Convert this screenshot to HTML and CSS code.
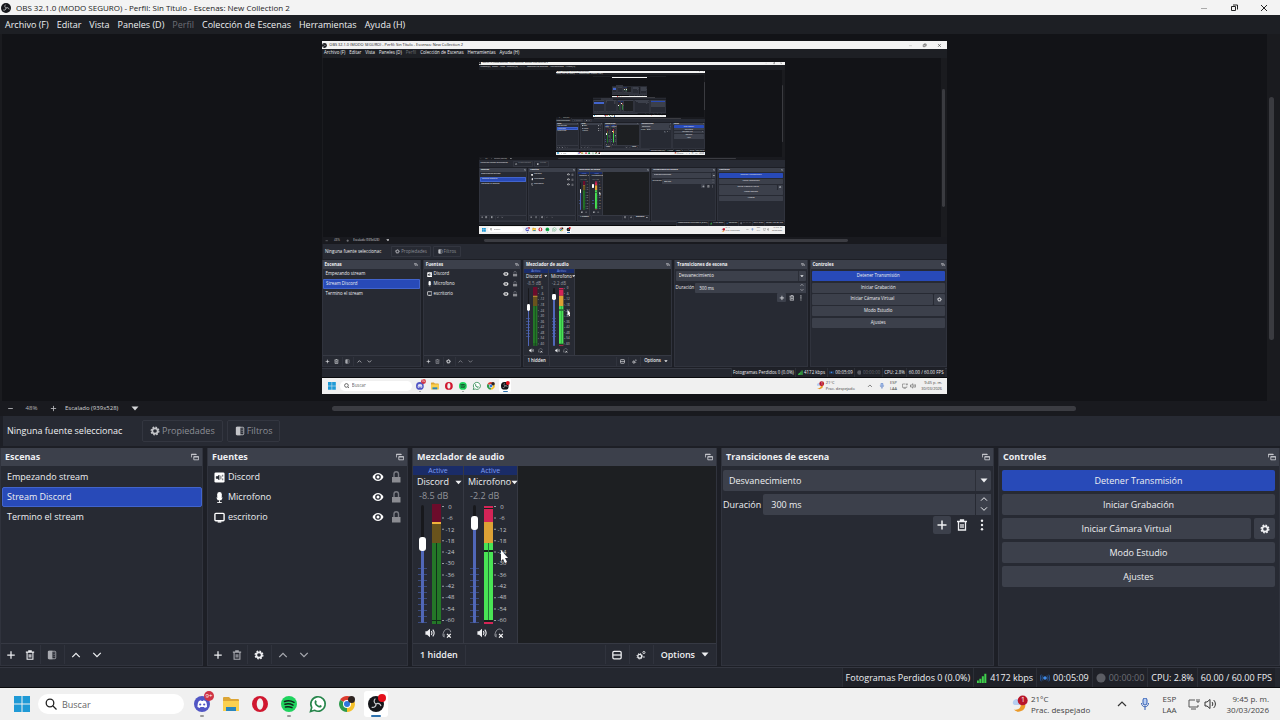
FILE: index.html
```html
<!DOCTYPE html>
<html lang="es">
<head>
    <meta charset="UTF-8">
    <meta name="viewport" content="width=device-width, initial-scale=1.0">
    <title>OBS 32.1.0</title>
    <link rel="stylesheet" href="styles.css">
</head>
<body>

    <!-- Shared icons -->
    <svg class="sprite" aria-hidden="true">
        <symbol id="i-obs" viewBox="0 0 16 16"><circle cx="8" cy="8" r="8" fill="#15161a"/><g fill="none" stroke="#c9cace" stroke-width="1.200"><path d="M8 8C5.800 7 5.500 4.200 7.400 2.600"/><path d="M8 8C5.800 7 5.500 4.200 7.400 2.600" transform="rotate(120 8 8)"/><path d="M8 8C5.800 7 5.500 4.200 7.400 2.600" transform="rotate(240 8 8)"/></g></symbol>
        <symbol id="i-float" viewBox="0 0 10 10"><path d="M.5 5.500v-4h6v1M.5 2h6M3.500 4.500h6v4h-6zM3.500 5h6" fill="none" stroke="#d5d7dc"/></symbol>
        <symbol id="i-plus" viewBox="0 0 12 12"><path d="M6 1.500v9M1.500 6h9" fill="none" stroke="currentColor" stroke-width="1.500"/></symbol>
        <symbol id="i-minus" viewBox="0 0 12 12"><path d="M2 6h8" fill="none" stroke="currentColor" stroke-width="1.500"/></symbol>
        <symbol id="i-trash" viewBox="0 0 12 12"><path d="M1 2.500h10M4.500 2V1h3v1M2.500 3v8h7V3M5 5v4M7 5v4" fill="none" stroke="currentColor" stroke-width="1.300"/></symbol>
        <symbol id="i-filter" viewBox="0 0 12 12"><path d="M2.500 1.500h7a1 1 0 0 1 1 1v7a1 1 0 0 1-1 1h-7z" fill="none" stroke="currentColor"/><path d="M2 1h4.500v10H2a1 1 0 0 1-1-1V2a1 1 0 0 1 1-1z" fill="currentColor"/><path d="M8.500 3v6" stroke="currentColor" stroke-dasharray="1 1"/></symbol>
        <symbol id="i-up" viewBox="0 0 12 12"><path d="M1.500 8.500L6 4l4.500 4.500" fill="none" stroke="currentColor" stroke-width="1.500"/></symbol>
        <symbol id="i-down" viewBox="0 0 12 12"><path d="M1.500 3.500L6 8l4.500-4.500" fill="none" stroke="currentColor" stroke-width="1.500"/></symbol>
        <symbol id="i-caret" viewBox="0 0 8 5"><path d="M.5.5h7L4 4.500z" fill="currentColor"/></symbol>
        <symbol id="i-gear" viewBox="0 0 12 12"><circle cx="6" cy="6" r="3.200" fill="none" stroke="currentColor" stroke-width="2"/><circle cx="6" cy="6" r="4.600" fill="none" stroke="currentColor" stroke-width="1.600" stroke-dasharray="2 1.610"/></symbol>
        <symbol id="i-gears" viewBox="0 0 12 12"><circle cx="4.500" cy="7.500" r="2.300" fill="none" stroke="currentColor" stroke-width="1.500"/><circle cx="4.500" cy="7.500" r="3.400" fill="none" stroke="currentColor" stroke-dasharray="1.300 1.370"/><circle cx="9.500" cy="3" r="1.300" fill="none" stroke="currentColor"/><circle cx="9.500" cy="8.500" r=".9" fill="currentColor"/></symbol>
        <symbol id="i-dots" viewBox="0 0 12 12"><g fill="currentColor"><circle cx="6" cy="1.800" r="1.200"/><circle cx="6" cy="6" r="1.200"/><circle cx="6" cy="10.200" r="1.200"/></g></symbol>
        <symbol id="i-eye" viewBox="0 0 12 12"><path d="M.5 6C3 .8 9 .8 11.500 6 9 11.200 3 11.200.5 6z" fill="#fff"/><circle cx="6" cy="6" r="2.800" fill="#272a33"/><circle cx="6" cy="6" r="1.500" fill="#fff"/></symbol>
        <symbol id="i-lock" viewBox="0 0 12 12"><path d="M4 6V3a2.200 2.200 0 0 1 4.500 0v3" fill="none" stroke="#777981" stroke-width="1.400"/><path d="M2 6h8.500v5.500H2z" fill="#8b8c92"/></symbol>
        <symbol id="i-app" viewBox="0 0 12 12"><rect x=".5" y=".5" width="11" height="11" rx="1.500" fill="#fff"/><path d="M2.500 5H4l1.500-1.500v5L4 7H2.500zM7.500 4v4M9.500 3v2M9.500 7v2" fill="#272a33" stroke="#272a33" stroke-width=".8"/></symbol>
        <symbol id="i-mic" viewBox="0 0 12 12"><rect x="3.500" y="0" width="5" height="7.500" rx="2.500" fill="#fff"/><path d="M2.500 6h7l-1.500 3H4z" fill="#fff"/><path d="M6 9v2.500M3.500 11.500h5" fill="none" stroke="#fff"/></symbol>
        <symbol id="i-screen" viewBox="0 0 12 12"><rect x="1" y="1.500" width="10" height="8" rx="1" fill="none" stroke="#fff" stroke-width="1.500"/><path d="M4 10.800h4" stroke="#fff" stroke-width="1.500"/></symbol>
        <symbol id="i-speaker" viewBox="0 0 12 12"><path d="M.5 4h2L6 1v10L2.500 8h-2z" fill="currentColor"/><path d="M7.500 3.800c1 1.300 1 3.100 0 4.400M9.300 2c2 2.400 2 5.600 0 8" fill="none" stroke="currentColor" stroke-width="1.300"/></symbol>
        <symbol id="i-phones" viewBox="0 0 12 12"><path d="M2.500 11C.5 10 1 7 2 5c1.500-5 8-5 8.500 0M2.500 7v4" fill="none" stroke="#92949b" stroke-width="1.200"/><path d="M6 7l4.500 4.500M10.500 7L6 11.500" stroke="#fff" stroke-width="1.500"/></symbol>
        <symbol id="i-layout" viewBox="0 0 12 12"><rect x="1" y="1.500" width="10" height="9" rx="1.500" fill="none" stroke="currentColor" stroke-width="1.500"/><path d="M1 6h10" stroke="currentColor" stroke-width="1.500"/></symbol>
    </svg>

    <div class="desktop">
        <!-- Title bar -->
        <div class="titlebar">
            <svg class="ico-sm"><use href="#i-obs"/></svg>
            <span class="title-text">OBS 32.1.0 (MODO SEGURO) - Perfil: Sin Título - Escenas: New Collection 2</span>
            <button class="win-btn" aria-label="Minimizar"><svg viewBox="0 0 10 10"><path d="M2 5.500h6" stroke="#aaa"/></svg></button>
            <button class="win-btn" aria-label="Restaurar"><svg viewBox="0 0 10 10"><path d="M2.500 3.500h4v4h-4zM4 2h4.500v4.500" fill="none" stroke="#222"/></svg></button>
            <button class="win-btn" aria-label="Cerrar"><svg viewBox="0 0 10 10"><path d="M2 2l6 6M8 2L2 8" stroke="#222"/></svg></button>
        </div>

        <!-- Menu -->
        <nav class="menubar">
            <a href="#">Archivo (F)</a>
            <a href="#">Editar</a>
            <a href="#">Vista</a>
            <a href="#">Paneles (D)</a>
            <a href="#" class="off">Perfil</a>
            <a href="#">Colección de Escenas</a>
            <a href="#">Herramientas</a>
            <a href="#">Ayuda (H)</a>
        </nav>

        <!-- Preview -->
        <div class="preview">
            <div class="canvas"><div class="screen"></div></div>
            <div class="vscroll"><div class="thumb"></div></div>
        </div>
        <div class="zoombar">
            <button aria-label="Alejar"><svg class="ico-xs"><use href="#i-minus"/></svg></button>
            <span class="zoom-level">48%</span>
            <button aria-label="Acercar"><svg class="ico-xs"><use href="#i-plus"/></svg></button>
            <label class="drop scale-drop">
                <select aria-label="Escala"><option>Escalado (939x528)</option></select>
                <svg class="caret"><use href="#i-caret"/></svg>
            </label>
            <div class="hscroll"><div class="thumb"></div></div>
        </div>

        <!-- Selected source -->
        <div class="context">
            <span class="context-name">Ninguna fuente seleccionac</span>
            <button class="ghost"><svg class="ico-sm"><use href="#i-gear"/></svg>Propiedades</button>
            <button class="ghost"><svg class="ico-sm"><use href="#i-filter"/></svg>Filtros</button>
        </div>

        <!-- Docks -->
        <div class="docks">
            <section class="dock">
                <h2>Escenas <svg class="float"><use href="#i-float"/></svg></h2>
                <ul class="list">
                    <li><button class="row">Empezando stream</button></li>
                    <li><button class="row selected">Stream Discord</button></li>
                    <li><button class="row">Termino el stream</button></li>
                </ul>
                <div class="tools">
                    <button aria-label="Agregar escena"><svg><use href="#i-plus"/></svg></button>
                    <button aria-label="Eliminar escena"><svg><use href="#i-trash"/></svg></button>
                    <button class="sep" aria-label="Filtros de escena"><svg class="dim"><use href="#i-filter"/></svg></button>
                    <button class="sep" aria-label="Subir escena"><svg><use href="#i-up"/></svg></button>
                    <button aria-label="Bajar escena"><svg><use href="#i-down"/></svg></button>
                </div>
            </section>

            <section class="dock">
                <h2>Fuentes <svg class="float"><use href="#i-float"/></svg></h2>
                <ul class="list sources">
                    <li><svg><use href="#i-app"/></svg><span>Discord</span><button aria-label="Ver Discord"><svg><use href="#i-eye"/></svg></button><button aria-label="Bloquear Discord"><svg><use href="#i-lock"/></svg></button></li>
                    <li><svg><use href="#i-mic"/></svg><span>Microfono</span><button aria-label="Ver Microfono"><svg><use href="#i-eye"/></svg></button><button aria-label="Bloquear Microfono"><svg><use href="#i-lock"/></svg></button></li>
                    <li><svg><use href="#i-screen"/></svg><span>escritorio</span><button aria-label="Ver escritorio"><svg><use href="#i-eye"/></svg></button><button aria-label="Bloquear escritorio"><svg><use href="#i-lock"/></svg></button></li>
                </ul>
                <div class="tools">
                    <button aria-label="Agregar fuente"><svg><use href="#i-plus"/></svg></button>
                    <button aria-label="Eliminar fuente"><svg class="dim"><use href="#i-trash"/></svg></button>
                    <button class="sep" aria-label="Propiedades de la fuente"><svg><use href="#i-gear"/></svg></button>
                    <button class="sep" aria-label="Subir fuente"><svg class="dim"><use href="#i-up"/></svg></button>
                    <button aria-label="Bajar fuente"><svg class="dim"><use href="#i-down"/></svg></button>
                </div>
            </section>

            <section class="dock">
                <h2>Mezclador de audio <svg class="float"><use href="#i-float"/></svg></h2>
                <div class="mixer">
                    <div class="strip">
                        <div class="active">Active</div>
                        <button class="strip-name">Discord <svg class="caret"><use href="#i-caret"/></svg></button>
                        <div class="db">-8.5 dB</div>
                        <div class="levels">
                            <input class="fader" type="range" min="0" max="100" value="69" style="--level: 69%" aria-label="Volumen de Discord">
                            <svg class="meter" viewBox="0 0 12 120" preserveAspectRatio="none">
                                <path fill="#6c0c2b" d="M0 0h9v18H0z"/><path fill="#f1b33b" d="M0 18h9v2H0z"/><path fill="#69531c" d="M0 20h9v19H0z"/><path fill="#247728" d="M0 39h9v81H0z"/>
                                <path fill="#11301a" d="M0 116h9v1H0zM4 39h1v81H4z"/><path stroke="#9a9ca2" stroke-dasharray="1 10.400" stroke-width="2" d="M11 2v118"/>
                            </svg>
                            <div class="scale"><span>0</span><span>-6</span><span>-12</span><span>-18</span><span>-24</span><span>-30</span><span>-36</span><span>-42</span><span>-48</span><span>-54</span><span>-60</span></div>
                        </div>
                        <div class="strip-btns">
                            <button aria-label="Silenciar Discord"><svg><use href="#i-speaker"/></svg></button>
                            <button aria-label="Monitorizar Discord"><svg><use href="#i-phones"/></svg></button>
                        </div>
                    </div>
                    <div class="strip">
                        <div class="active">Active</div>
                        <button class="strip-name">Microfono <svg class="caret"><use href="#i-caret"/></svg></button>
                        <div class="db">-2.2 dB</div>
                        <div class="levels">
                            <input class="fader" type="range" min="0" max="100" value="89" style="--level: 89%" aria-label="Volumen de Microfono">
                            <svg class="meter" viewBox="0 0 12 120" preserveAspectRatio="none">
                                <path fill="#d42457" d="M0 2h9v16H0z"/><path fill="#dda135" d="M0 18h9v21H0z"/><path fill="#49e455" d="M0 39h9v79H0z"/><path fill="#d42457" d="M0 118h9v2H0z"/>
                                <path fill="#17231c" d="M0 4h9v1H0zM0 46h9v2H0zM0 116h9v2H0z"/><path fill="#237a35" d="M4 39h1v77H4z"/><path stroke="#9a9ca2" stroke-dasharray="1 10.400" stroke-width="2" d="M11 2v118"/>
                            </svg>
                            <div class="scale"><span>0</span><span>-6</span><span>-12</span><span>-18</span><span>-24</span><span>-30</span><span>-36</span><span>-42</span><span>-48</span><span>-54</span><span>-60</span></div>
                            <svg class="cursor" viewBox="0 0 8 13"><path d="M1 0v11l2-2 2 4 2-1-2-4h3z" fill="#fff"/></svg>
                        </div>
                        <div class="strip-btns">
                            <button aria-label="Silenciar Microfono"><svg><use href="#i-speaker"/></svg></button>
                            <button aria-label="Monitorizar Microfono"><svg><use href="#i-phones"/></svg></button>
                        </div>
                    </div>
                </div>
                <div class="tools mixer-tools">
                    <button class="word">1 hidden</button>
                    <span class="fill"></span>
                    <button class="sep" aria-label="Disposición"><svg><use href="#i-layout"/></svg></button>
                    <button class="sep" aria-label="Propiedades avanzadas de audio"><svg><use href="#i-gears"/></svg></button>
                    <button class="sep word">Options <svg class="caret"><use href="#i-caret"/></svg></button>
                </div>
            </section>

            <section class="dock">
                <h2>Transiciones de escena <svg class="float"><use href="#i-float"/></svg></h2>
                <div class="form">
                    <label class="drop field">
                        <select aria-label="Transición"><option>Desvanecimiento</option></select>
                        <span class="drop-arrow"><svg class="caret"><use href="#i-caret"/></svg></span>
                    </label>
                    <div class="duration">
                        <label>Duración <input type="text" value="300 ms"></label>
                        <div class="spin">
                            <button aria-label="Más"><svg><use href="#i-up"/></svg></button>
                            <button aria-label="Menos"><svg><use href="#i-down"/></svg></button>
                        </div>
                    </div>
                    <div class="form-tools">
                        <button class="lit" aria-label="Agregar transición"><svg><use href="#i-plus"/></svg></button>
                        <button aria-label="Eliminar transición"><svg><use href="#i-trash"/></svg></button>
                        <button aria-label="Más opciones"><svg><use href="#i-dots"/></svg></button>
                    </div>
                </div>
            </section>

            <section class="dock">
                <h2>Controles <svg class="float"><use href="#i-float"/></svg></h2>
                <div class="controls">
                    <button class="btn primary">Detener Transmisión</button>
                    <button class="btn">Iniciar Grabación</button>
                    <div class="pair">
                        <button class="btn">Iniciar Cámara Virtual</button>
                        <button class="btn" aria-label="Configurar cámara virtual"><svg class="ico-sm"><use href="#i-gear"/></svg></button>
                    </div>
                    <button class="btn">Modo Estudio</button>
                    <button class="btn">Ajustes</button>
                </div>
            </section>
        </div>

        <!-- Status bar -->
        <div class="status">
            <span>Fotogramas Perdidos 0 (0.0%)</span>
            <span><svg viewBox="0 0 12 12"><path d="M1 12V9M4 12V7M7 12V4M10 12V1" stroke="#3fd14c" stroke-width="2.400"/></svg>4172 kbps</span>
            <span><svg viewBox="0 0 12 12"><circle cx="6" cy="6" r="2.200" fill="#3f8bea"/><path d="M3.500 3c-1.500 1.500-1.500 4.500 0 6M8.500 3c1.500 1.500 1.500 4.500 0 6M1.500 2c-1.500 2-1.500 6 0 8M10.500 2c1.500 2 1.500 6 0 8" fill="none" stroke="#2b63ad"/></svg>00:05:09</span>
            <span class="off"><svg viewBox="0 0 12 12"><circle cx="6" cy="6" r="5.500" fill="#5b5d64"/></svg>00:00:00</span>
            <span>CPU: 2.8%</span>
            <span>60.00 / 60.00 FPS</span>
        </div>

        <!-- Taskbar -->
        <div class="taskbar">
            <button class="start" aria-label="Inicio"><svg viewBox="0 0 16 16"><path d="M0 0h7.500v7.500H0zM8.500 0H16v7.500H8.500zM0 8.500h7.500V16H0zM8.500 8.500H16V16H8.500z" fill="#1f9ad6"/></svg></button>
            <label class="search">
                <svg viewBox="0 0 12 12"><circle cx="5" cy="5" r="3.800" fill="none" stroke="#222" stroke-width="1.300"/><path d="M8 8l3.500 3.500" stroke="#222" stroke-width="1.300"/></svg>
                <input type="text" placeholder="Buscar" aria-label="Buscar">
            </label>
            <div class="apps">
                <button class="open" aria-label="Discord"><svg viewBox="0 0 20 20"><circle cx="10" cy="10" r="8" fill="#5156c4"/><path d="M5.500 13c0-3 .5-5 1.500-6l2-.8.500.8h1.500l.5-.8 2 .8c1 1 1.500 3 1.500 6l-2.200 1-.8-1h-3.500l-.8 1z" fill="#fff"/><circle cx="8.200" cy="10.500" r="1.100" fill="#5156c4"/><circle cx="12.200" cy="10.500" r="1.100" fill="#5156c4"/></svg><span class="badge">9+</span></button>
                <button aria-label="Explorador"><svg viewBox="0 0 20 20"><path d="M2 4a1 1 0 0 1 1-1h5l2 2h7a1 1 0 0 1 1 1v11H2z" fill="#dca536"/><path d="M2 7h16v10H2z" fill="#fbd04f"/><path d="M5 13h10v4H5z" fill="#2a86bd"/></svg></button>
                <button aria-label="Opera"><svg viewBox="0 0 20 20"><circle cx="10" cy="10" r="8" fill="#d0172f"/><ellipse cx="10" cy="10" rx="3.300" ry="5.700" fill="#f1f1f1"/></svg></button>
                <button class="open" aria-label="Spotify"><svg viewBox="0 0 20 20"><circle cx="10" cy="10" r="8" fill="#1fd35e"/><path d="M5.500 7.500c3-1 6.500-.8 9.500.8M6 10.300c2.800-.8 5.500-.5 8 .8M6.500 13c2.300-.6 4.500-.4 6.500.7" fill="none" stroke="#10231a" stroke-width="1.500" stroke-linecap="round"/></svg></button>
                <button aria-label="WhatsApp"><svg viewBox="0 0 20 20"><path d="M2.500 17.500l1.200-4a7.200 7.200 0 1 1 2.800 2.800z" fill="#fff" stroke="#25854a" stroke-width="1.600"/><path d="M7 6.500c.7-.8 1.300-.2 1.800 1.300.1.500-.8 1-.5 1.400.8 1.400 1.500 2 2.700 2.500.5.200.8-.9 1.300-.8 1.500.6 1.700 1 1.200 1.800-1 1.500-3 .9-4.700-.4C7 11 5.800 8.500 7 6.500z" fill="#25854a"/></svg></button>
                <button aria-label="Chrome"><svg viewBox="0 0 20 20"><path d="M10 10L3.100 6A8 8 0 0 1 16.900 6z" fill="#dd3b2e"/><path d="M10 10l6.900-4A8 8 0 0 1 10 18z" fill="#f5c029"/><path d="M10 10v8A8 8 0 0 1 3.100 6z" fill="#2d9a4b"/><circle cx="10" cy="10" r="4" fill="#fff"/><circle cx="10" cy="10" r="3" fill="#2f76dd"/><circle cx="14.500" cy="5.500" r="3.500" fill="#2d2320"/></svg></button>
                <button class="open current" aria-label="OBS"><svg viewBox="0 0 20 20"><use href="#i-obs" x="2" y="2" width="16" height="16"/><circle cx="16" cy="4" r="4" fill="#e4101c"/></svg></button>
            </div>
            <div class="weather">
                <svg viewBox="0 0 20 20"><path d="M2 9a4 4 0 0 1 7-3l1 5H4a2 2 0 0 1-2-2z" fill="#b5cdf0"/><path d="M16 11a7.500 7.500 0 0 1-13 5c5 1 8-1 8-6z" fill="#eb9a29"/><circle cx="13" cy="6" r="5.500" fill="#b8152a"/></svg>
                <span class="weather-badge">1</span>
                <p>21°C<br>Prac. despejado</p>
            </div>
            <div class="tray">
                <button aria-label="Iconos ocultos"><svg viewBox="0 0 12 12"><path d="M2 8l4-4 4 4" fill="none" stroke="#333" stroke-width="1.200"/></svg></button>
                <svg viewBox="0 0 12 12"><rect x="4" y="0" width="4" height="7" rx="2" fill="#b7cdf3" stroke="#315eb5"/><path d="M2.500 5c0 5 7 5 7 0M6 9v3" fill="none" stroke="#315eb5"/></svg>
                <p>ESP<br>LAA</p>
                <div class="net">
                    <svg viewBox="0 0 12 12"><path d="M7 2H1v7h9V7M3 11h5M9 1v3h2V1" fill="none" stroke="#555"/></svg>
                    <svg viewBox="0 0 12 12"><path d="M1 4h2l3-2.500v9L3 8H1zM8 4c1 1 1 3 0 4M9.500 2c2.500 2 2.500 6 0 8" fill="none" stroke="#333"/></svg>
                </div>
                <p class="clock">9:45 p. m.<br>30/03/2026</p>
            </div>
        </div>
    </div>

    <script>
        // The preview shows the desktop itself, so the same desktop repeats inside it
        const desktop = document.querySelector(".desktop");
        const source = desktop.cloneNode(true);
        let screenBox = desktop.querySelector(".screen");

        for (let depth = 0; depth < 5; depth++) {
            const copy = source.cloneNode(true);
            copy.inert = true;
            screenBox.appendChild(copy);
            screenBox = copy.querySelector(".screen");
        }
    </script>

</body>
</html>
```
FILE: styles.css
```css
* {
    margin: 0;
    padding: 0;
    box-sizing: border-box;
}
body {
    background: #1d1f26;
    overflow: hidden;
}
button, input, select {
    font: inherit;
    color: inherit;
    background: none;
    border: none;
    min-width: 0;
    appearance: none;
}
button {
    display: flex;
    align-items: center;
    justify-content: center;
}
svg {
    display: block;
    flex: none;
    width: 12px;
    height: 12px;
}
ul {
    list-style: none;
}
a {
    color: inherit;
    text-decoration: none;
}
.sprite {
    position: absolute;
    width: 0;
    height: 0;
}
.ico-sm {
    width: 10px;
    height: 10px;
}
.ico-xs {
    width: 7px;
    height: 7px;
}
.caret {
    width: 8px;
    height: 5px;
}
.off {
    color: #6c6e75;
}
.dim {
    color: #a9abb1;
}
.desktop {
    display: flex;
    flex-direction: column;
    width: 100vw;
    height: 100vh;
    overflow: hidden;
    background: #1d1f26;
    color: #eeeff2;
    font-family: "Open Sans", sans-serif;
    font-size: 9px;
    line-height: 12px;
    white-space: nowrap;
}
/* Title bar */
.titlebar {
    display: flex;
    align-items: center;
    gap: 5px;
    height: 15px;
    padding: 0 4px 0 1px;
    background: #f3f3f3;
    color: #222;
    font-size: 8px;
}
.title-text {
    flex: 1;
}
.win-btn {
    width: 25px;
    height: 15px;
}
.win-btn svg {
    width: 10px;
    height: 10px;
}
/* Menu */
.menubar {
    display: flex;
    align-items: center;
    gap: 8px;
    height: 19px;
    padding: 0 5px;
    background: #1d1f24;
}
/* Preview */
.preview {
    display: flex;
    flex: 1;
    min-height: 0;
    background: #1a1b1f;
}
.canvas {
    display: flex;
    flex: 1;
    align-items: center;
    justify-content: center;
    margin-left: 2px;
    overflow: hidden;
    background: #121317;
}
.screen {
    zoom: 0.489;
    width: 100vw;
    height: 100vh;
    flex: none;
    background: #121317;
}
.vscroll {
    width: 13px;
    padding: 63px 6px 0 2px;
}
.vscroll .thumb {
    height: 80%;
    border-radius: 3px;
    background: #3a3b40;
}
.zoombar {
    display: flex;
    align-items: center;
    height: 15px;
    padding: 0 6px 1px;
    background: #191a1f;
    color: #b5b6ba;
    font-size: 6px;
}
.zoombar button {
    width: 8px;
}
.zoom-level {
    width: 35px;
    text-align: center;
}
.drop {
    display: flex;
    align-items: center;
}
.drop select {
    flex: 1;
}
.scale-drop {
    width: 74px;
    margin-left: 8px;
    color: #d4d5d8;
}
.hscroll {
    flex: 1;
    padding-left: 193px;
}
.hscroll .thumb {
    width: 79%;
    height: 5px;
    border-radius: 3px;
    background: #3b3c42;
}
/* Selected source */
.context {
    display: flex;
    align-items: center;
    gap: 4px;
    height: 30px;
    margin: 0 0 2px 3px;
    padding-left: 4px;
    background: #272a33;
}
.context-name {
    width: 131px;
}
.ghost {
    gap: 2px;
    height: 22px;
    padding: 0 7px;
    border: 1px solid #333640;
    border-radius: 2px;
    color: #8c8e95;
}
.ghost svg {
    color: #c3c4c8;
}
/* Docks */
.docks {
    display: grid;
    grid-template-columns: 203fr 201fr 305fr 273fr 282fr;
    gap: 4px;
}
.dock {
    display: flex;
    flex-direction: column;
    min-width: 0;
    background: #272a33;
    border: 1px solid #30333d;
    border-top: none;
}
.dock h2 {
    display: flex;
    align-items: center;
    justify-content: space-between;
    height: 18px;
    padding: 0 3px 0 4px;
    background: #3c404b;
    font-size: 9px;
    font-weight: 700;
}
.float {
    width: 8px;
    height: 8px;
}
.list {
    flex: 1;
    padding: 1px 0 0 1px;
}
.row {
    justify-content: flex-start;
    width: 100%;
    height: 20px;
    padding: 0 5px;
    border-radius: 2px;
}
.selected {
    background: #284ab8;
    border: 1px solid #4264cc;
    padding: 0 4px;
}
.sources li {
    display: flex;
    align-items: center;
    gap: 6px;
    height: 20px;
    padding: 0 5px;
}
.sources li > svg {
    width: 11px;
    height: 11px;
    margin-right: -3px;
}
.sources span {
    flex: 1;
}
.tools {
    display: flex;
    align-items: center;
    height: 22px;
    border-top: 1px solid #363943;
}
.tools button {
    width: 19px;
    height: 19px;
}
.tools svg {
    width: 10px;
    height: 10px;
}
.tools .sep {
    border-left: 1px solid #30333d;
    width: 23px;
    margin-left: 1px;
}
.tools .word {
    width: auto;
    gap: 6px;
    padding: 0 7px;
    font-weight: 600;
}
.tools .caret {
    width: 8px;
    height: 5px;
}
.fill {
    flex: 1;
    height: 20px;
    border-left: 1px solid #30333d;
}
/* Mixer */
.mixer {
    display: flex;
    flex: 1;
    background: #1d1f22;
}
.strip {
    display: flex;
    flex-direction: column;
    width: 51px;
    padding-bottom: 5px;
    background: #272a33;
    border-right: 1px solid #363943;
}
.strip + .strip {
    width: 54px;
}
.active {
    height: 9px;
    background: #1a2c68;
    color: #7c9af0;
    font-size: 7px;
    line-height: 9px;
    text-align: center;
}
.strip-name {
    justify-content: space-between;
    height: 14px;
    padding: 0 1px 0 4px;
}
.strip-name .caret {
    width: 7px;
}
.db {
    height: 15px;
    padding-left: 6px;
    line-height: 14px;
    color: #92949b;
}
.levels {
    position: relative;
    display: flex;
    height: 120px;
    padding-left: 5px;
}
.strip + .strip .levels {
    padding-left: 6px;
}
.fader {
    writing-mode: vertical-lr;
    direction: rtl;
    width: 9px;
    height: 118px;
    margin: 1px 5px 0 0;
    background: repeating-linear-gradient(to top, #3b4c80 0 1px, transparent 1px 6px) no-repeat 0 100% / 9px 60px;
}
.fader::-webkit-slider-runnable-track {
    width: 3px;
    height: 118px;
    border-radius: 2px;
    background: linear-gradient(to top, #5067b8 var(--level), #17181c var(--level));
}
.fader::-webkit-slider-thumb {
    appearance: none;
    width: 7px;
    height: 14px;
    margin-left: -2px;
    border-radius: 3px;
    background: #fff;
}
.meter {
    width: 12px;
    height: 120px;
}
.scale {
    display: flex;
    flex-direction: column;
    justify-content: space-between;
    height: 120px;
    width: 12px;
    font-size: 6px;
    line-height: 7px;
    text-align: center;
    color: #c6c8cd;
}
.cursor {
    position: absolute;
    left: 36px;
    top: 46px;
    width: 8px;
    height: 13px;
}
.strip-btns {
    display: flex;
    justify-content: center;
    gap: 7px;
    padding-top: 4px;
}
.strip-btns svg {
    width: 10px;
    height: 10px;
}
/* Transitions */
.form {
    padding: 4px 2px 0 1px;
}
.field {
    height: 21px;
    padding-left: 6px;
    border-radius: 2px;
    background: #3c404b;
}
.drop-arrow {
    display: flex;
    align-items: center;
    justify-content: center;
    width: 16px;
    height: 21px;
    border-left: 1px solid #2c2f38;
}
.duration {
    display: flex;
    margin-top: 3px;
}
.duration label {
    display: flex;
    flex: 1;
    align-items: center;
    gap: 2px;
}
.duration input {
    flex: 1;
    height: 21px;
    padding-left: 8px;
    border-radius: 2px 0 0 2px;
    background: #3c404b;
}
.spin {
    width: 15px;
    margin-left: 1px;
    background: #3c404b;
}
.spin button {
    width: 15px;
    height: 10px;
}
.spin svg {
    width: 8px;
    height: 8px;
}
.form-tools {
    display: flex;
    justify-content: flex-end;
    gap: 2px;
    margin-top: 1px;
}
.form-tools button {
    width: 18px;
    height: 18px;
    border-radius: 2px;
}
.form-tools .lit {
    background: #3c404b;
}
/* Controls */
.controls {
    display: flex;
    flex-direction: column;
    gap: 3px;
    padding: 4px 4px 4px 3px;
}
.btn {
    flex: 1;
    height: 21px;
    min-height: 21px;
    border-radius: 2px;
    background: #3c404b;
}
.controls > .btn {
    flex: none;
}
.primary {
    background: #284ab8;
}
.pair {
    display: flex;
    gap: 3px;
}
.pair .btn:last-child {
    flex: none;
    width: 21px;
}
/* Status bar */
.status {
    display: flex;
    justify-content: flex-end;
    align-items: center;
    height: 21px;
    margin-top: 1px;
    padding-right: 5px;
    background: #24272f;
    border-top: 1px solid #343741;
    border-bottom: 1px solid #0a0b0d;
}
.status span {
    display: flex;
    align-items: center;
    gap: 3px;
    height: 19px;
    padding: 0 3px;
    border-left: 1px solid #2c2f37;
    background: #1f2128;
}
.status svg {
    width: 10px;
    height: 10px;
}
/* Taskbar */
.taskbar {
    display: flex;
    align-items: center;
    height: 32px;
    padding: 0 11px 0 14px;
    background: #f0f0f0;
    color: #444;
    font-size: 8px;
    line-height: 11px;
}
.start svg {
    width: 16px;
    height: 16px;
}
.search {
    display: flex;
    align-items: center;
    gap: 5px;
    width: 146px;
    height: 20px;
    margin-left: 8px;
    padding: 0 7px;
    border-radius: 10px;
    background: #fff;
    font-size: 9px;
}
.search input {
    flex: 1;
}
.search input::placeholder {
    color: #666;
}
.apps {
    display: flex;
    flex: 1;
    gap: 5px;
    margin-left: 6px;
}
.apps button {
    position: relative;
    width: 24px;
    height: 26px;
    border-radius: 3px;
}
.apps svg {
    width: 20px;
    height: 20px;
}
.apps .current {
    background: #fff;
}
.open::after {
    content: "";
    position: absolute;
    bottom: 0;
    left: 10px;
    width: 4px;
    height: 2px;
    border-radius: 1px;
    background: #999;
}
.current::after {
    left: 7px;
    width: 10px;
    background: #2d71ae;
}
.badge {
    position: absolute;
    top: 0;
    right: 0;
    width: 10px;
    height: 10px;
    border-radius: 5px;
    background: #cf3445;
    color: #fff;
    font-size: 6px;
    line-height: 10px;
}
.weather {
    position: relative;
    display: flex;
    align-items: center;
    gap: 2px;
    margin-right: 26px;
}
.weather svg {
    width: 18px;
    height: 18px;
}
.weather-badge {
    position: absolute;
    left: 10px;
    top: 1px;
    color: #fff;
    font-size: 7px;
}
.tray {
    display: flex;
    align-items: center;
    gap: 11px;
}
.tray p {
    text-align: center;
}
.net {
    display: flex;
    gap: 4px;
}
.tray .clock {
    text-align: right;
}
```
